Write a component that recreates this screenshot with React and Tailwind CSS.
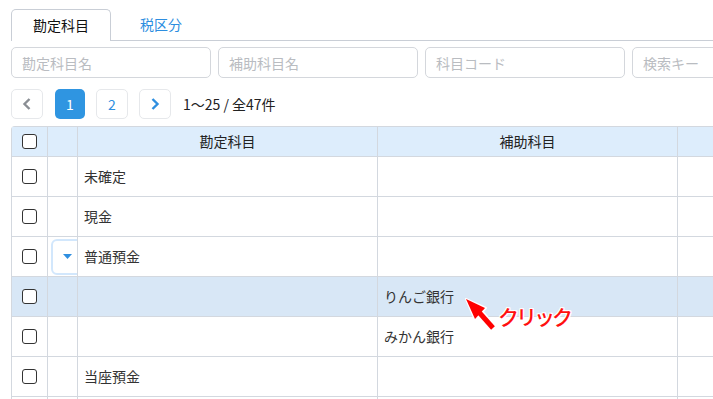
import React from "react";

const cols = ["w-[36px]", "w-[30px]", "w-[300px]", "w-[300px]", "w-[120px]"];

const rows = [
  { account: "未確定", sub: "" },
  { account: "現金", sub: "" },
  { account: "普通預金", sub: "", toggle: true },
  { account: "", sub: "りんご銀行", selected: true },
  { account: "", sub: "みかん銀行" },
  { account: "当座預金", sub: "" },
  { account: "", sub: "" },
];

const Checkbox = () => (
  <span className="block w-[15px] h-[15px] border-[1.5px] border-[#333] rounded-[3px] bg-white"></span>
);

const Cell = ({ w, className = "", children }) => (
  <div className={`${w} shrink-0 border-r border-b border-[#d3d8df] flex items-center ${className}`}>
    {children}
  </div>
);

export default function App() {
  return (
    <div className="relative w-[713px] h-[399px] overflow-hidden bg-white text-[14px] text-[#333] font-['Meiryo','Noto_Sans_CJK_JP',sans-serif]">
      {/* Tabs */}
      <div className="flex pt-[9px] h-[41px]">
        <div className="w-[11px] shrink-0"></div>
        <div className="w-[100px] shrink-0 border border-b-0 border-[#c9ced6] rounded-t-[5px] flex items-center justify-center text-[#111]">
          勘定科目
        </div>
        <div className="w-[100px] shrink-0 border-b border-[#c9ced6] flex items-center justify-center text-[#2d8ee0]">
          税区分
        </div>
        <div className="flex-1 border-b border-[#c9ced6]"></div>
      </div>

      {/* Search inputs */}
      <div className="flex gap-[7px] pl-[11px] mt-[6px]">
        {["勘定科目名", "補助科目名", "科目コード", "検索キー"].map((p) => (
          <input
            key={p}
            placeholder={p}
            className="w-[200px] h-[31px] shrink-0 border border-[#d4d7dc] rounded-[5px] px-[10px] text-[14px] placeholder:text-[#b9bcc1] outline-none"
          />
        ))}
      </div>

      {/* Pagination */}
      <div className="flex items-center pl-[11px] mt-[11px] h-[30px]">
        <button className="w-[32px] h-[30px] border border-[#e6e8eb] rounded-[5px] flex items-center justify-center text-[#8a8e94]">
          <svg width="10" height="14" viewBox="0 0 10 14">
            <path d="M7.5 2 L2.5 7 L7.5 12" fill="none" stroke="currentColor" strokeWidth="2.4" />
          </svg>
        </button>
        <button className="ml-[12px] w-[30px] h-[30px] rounded-[5px] bg-[#2f95e1] text-white flex items-center justify-center">
          1
        </button>
        <button className="ml-[11px] w-[32px] h-[30px] border border-[#e6e8eb] rounded-[5px] text-[#2f8fe0] flex items-center justify-center">
          2
        </button>
        <button className="ml-[11px] w-[32px] h-[30px] border border-[#e6e8eb] rounded-[5px] flex items-center justify-center text-[#2f8fe0]">
          <svg width="10" height="14" viewBox="0 0 10 14">
            <path d="M2.5 2 L7.5 7 L2.5 12" fill="none" stroke="currentColor" strokeWidth="2.4" />
          </svg>
        </button>
        <span className="ml-[12px] text-[#222]">1〜25 / 全47件</span>
      </div>

      {/* Table */}
      <div className="ml-[11px] mt-[7px] w-[800px] border-l border-t border-[#d3d8df] rounded-tl-[4px]">
        <div className="flex h-[30px] bg-[#ddedfc] text-[#222]">
          <Cell w={cols[0]} className="justify-center">
            <Checkbox />
          </Cell>
          <Cell w={cols[1]} />
          <Cell w={cols[2]} className="justify-center">勘定科目</Cell>
          <Cell w={cols[3]} className="justify-center">補助科目</Cell>
          <Cell w={cols[4]} />
        </div>
        {rows.map((r, i) => (
          <div key={i} className={`flex h-[40px] ${r.selected ? "bg-[#d8e7f6]" : "bg-white"}`}>
            <Cell w={cols[0]} className="justify-center">
              <Checkbox />
            </Cell>
            <Cell w={cols[1]} className="overflow-hidden pl-[3px]">
              {r.toggle && (
                <span className="w-[36px] h-[36px] shrink-0 border-2 border-[#d2e7fc] rounded-[6px] flex items-center justify-center pr-[4px]">
                  <svg width="9" height="6" viewBox="0 0 9 6">
                    <path d="M0 0 H9 L4.5 5 Z" fill="#2f8fe0" />
                  </svg>
                </span>
              )}
            </Cell>
            <Cell w={cols[2]} className="px-[6px]">{r.account}</Cell>
            <Cell w={cols[3]} className="px-[6px]">{r.sub}</Cell>
            <Cell w={cols[4]} />
          </div>
        ))}
      </div>

      {/* Annotation overlay */}
      <svg className="absolute left-[460px] top-[293px]" width="42" height="42" viewBox="0 0 42 42">
        <path d="M6 6 L26 15 L15 27 Z" fill="#ff0000" stroke="#fff" strokeWidth="2" strokeLinejoin="round" />
        <path d="M18 18 L33 35" stroke="#fff" strokeWidth="8" />
        <path d="M17 17 L33 35" stroke="#ff0000" strokeWidth="5" />
        <path d="M6 6 L25 15 L15 26 Z" fill="#ff0000" />
      </svg>
      <span className="absolute left-[498px] top-[302px] text-[21px] leading-[28px] font-medium text-[#ff1010] tracking-[-3px] [text-shadow:1px_1px_0_#fff,-1px_-1px_0_#fff,1px_-1px_0_#fff,-1px_1px_0_#fff,0_1px_0_#fff,0_-1px_0_#fff,1px_0_0_#fff,-1px_0_0_#fff]">
        クリック
      </span>
    </div>
  );
}
